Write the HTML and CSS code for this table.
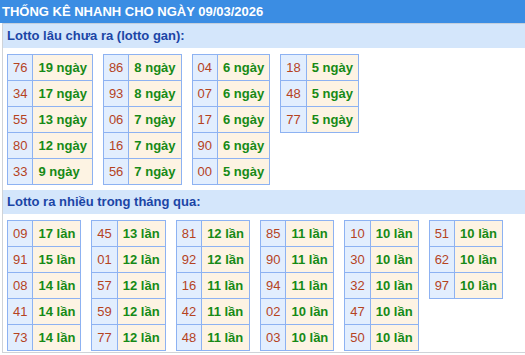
FILE: index.html
```html
<!DOCTYPE html>
<html lang="vi">
<head>
<meta charset="utf-8">
<link rel="stylesheet" href="styles.css">
</head>
<body>
<div class="header">THỐNG KÊ NHANH CHO NGÀY 09/03/2026</div>
<div class="box">
  <div class="title">Lotto lâu chưa ra (lotto gan):</div>
  <div class="tables first">
    <table>
      <tr><td class="n">76</td><td class="v">19 ngày</td></tr>
      <tr><td class="n">34</td><td class="v">17 ngày</td></tr>
      <tr><td class="n">55</td><td class="v">13 ngày</td></tr>
      <tr><td class="n">80</td><td class="v">12 ngày</td></tr>
      <tr><td class="n">33</td><td class="v">9 ngày</td></tr>
    </table>
    <table>
      <tr><td class="n">86</td><td class="v">8 ngày</td></tr>
      <tr><td class="n">93</td><td class="v">8 ngày</td></tr>
      <tr><td class="n">06</td><td class="v">7 ngày</td></tr>
      <tr><td class="n">16</td><td class="v">7 ngày</td></tr>
      <tr><td class="n">56</td><td class="v">7 ngày</td></tr>
    </table>
    <table>
      <tr><td class="n">04</td><td class="v">6 ngày</td></tr>
      <tr><td class="n">07</td><td class="v">6 ngày</td></tr>
      <tr><td class="n">17</td><td class="v">6 ngày</td></tr>
      <tr><td class="n">90</td><td class="v">6 ngày</td></tr>
      <tr><td class="n">00</td><td class="v">5 ngày</td></tr>
    </table>
    <table>
      <tr><td class="n">18</td><td class="v">5 ngày</td></tr>
      <tr><td class="n">48</td><td class="v">5 ngày</td></tr>
      <tr><td class="n">77</td><td class="v">5 ngày</td></tr>
    </table>
  </div>
  <div class="title">Lotto ra nhiều trong tháng qua:</div>
  <div class="tables">
    <table>
      <tr><td class="n">09</td><td class="v">17 lần</td></tr>
      <tr><td class="n">91</td><td class="v">15 lần</td></tr>
      <tr><td class="n">08</td><td class="v">14 lần</td></tr>
      <tr><td class="n">41</td><td class="v">14 lần</td></tr>
      <tr><td class="n">73</td><td class="v">14 lần</td></tr>
    </table>
    <table>
      <tr><td class="n">45</td><td class="v">13 lần</td></tr>
      <tr><td class="n">01</td><td class="v">12 lần</td></tr>
      <tr><td class="n">57</td><td class="v">12 lần</td></tr>
      <tr><td class="n">59</td><td class="v">12 lần</td></tr>
      <tr><td class="n">77</td><td class="v">12 lần</td></tr>
    </table>
    <table>
      <tr><td class="n">81</td><td class="v">12 lần</td></tr>
      <tr><td class="n">92</td><td class="v">12 lần</td></tr>
      <tr><td class="n">16</td><td class="v">11 lần</td></tr>
      <tr><td class="n">42</td><td class="v">11 lần</td></tr>
      <tr><td class="n">48</td><td class="v">11 lần</td></tr>
    </table>
    <table>
      <tr><td class="n">85</td><td class="v">11 lần</td></tr>
      <tr><td class="n">90</td><td class="v">11 lần</td></tr>
      <tr><td class="n">94</td><td class="v">11 lần</td></tr>
      <tr><td class="n">02</td><td class="v">10 lần</td></tr>
      <tr><td class="n">03</td><td class="v">10 lần</td></tr>
    </table>
    <table>
      <tr><td class="n">10</td><td class="v">10 lần</td></tr>
      <tr><td class="n">30</td><td class="v">10 lần</td></tr>
      <tr><td class="n">32</td><td class="v">10 lần</td></tr>
      <tr><td class="n">47</td><td class="v">10 lần</td></tr>
      <tr><td class="n">50</td><td class="v">10 lần</td></tr>
    </table>
    <table>
      <tr><td class="n">51</td><td class="v">10 lần</td></tr>
      <tr><td class="n">62</td><td class="v">10 lần</td></tr>
      <tr><td class="n">97</td><td class="v">10 lần</td></tr>
    </table>
  </div>
</div>
</body>
</html>
```

FILE: styles.css
```css
html, body {
  margin: 0;
  padding: 0;
  background: #ffffff;
  font-family: "Liberation Sans", Arial, sans-serif;
  font-size: 13px;
}

.header {
  height: 23px;
  line-height: 23px;
  padding-left: 2px;
  background: #3b8de3;
  color: #ffffff;
  font-weight: bold;
  font-size: 13px;
  white-space: nowrap;
}

.box {
  margin-left: 2px;
  border-top: 1px solid #c4cfdc;
  border-left: 1px solid #cfd3d8;
  border-bottom: 1px solid #cfd3d8;
  padding-bottom: 1px;
}

.title {
  height: 24px;
  line-height: 24px;
  padding-left: 4px;
  background: #d4e6fb;
  color: #1b45a6;
  font-weight: bold;
  font-size: 13px;
}

.tables {
  display: flex;
  align-items: flex-start;
  gap: 10px;
  padding-left: 4px;
  margin-top: 6px;
}

.tables.first {
  margin-bottom: 5px;
}

table {
  border-spacing: 0;
  border-top: 1px solid #8db2f2;
  border-left: 1px solid #8db2f2;
}

td {
  height: 25px;
  line-height: 25px;
  padding: 0 5px;
  border-right: 1px solid #8db2f2;
  border-bottom: 1px solid #8db2f2;
  white-space: nowrap;
}

td.n {
  background: #e2eefe;
  color: #b5431f;
  text-align: center;
}

td.v {
  background: #fdf3e3;
  color: #168a16;
  font-weight: bold;
}
```
